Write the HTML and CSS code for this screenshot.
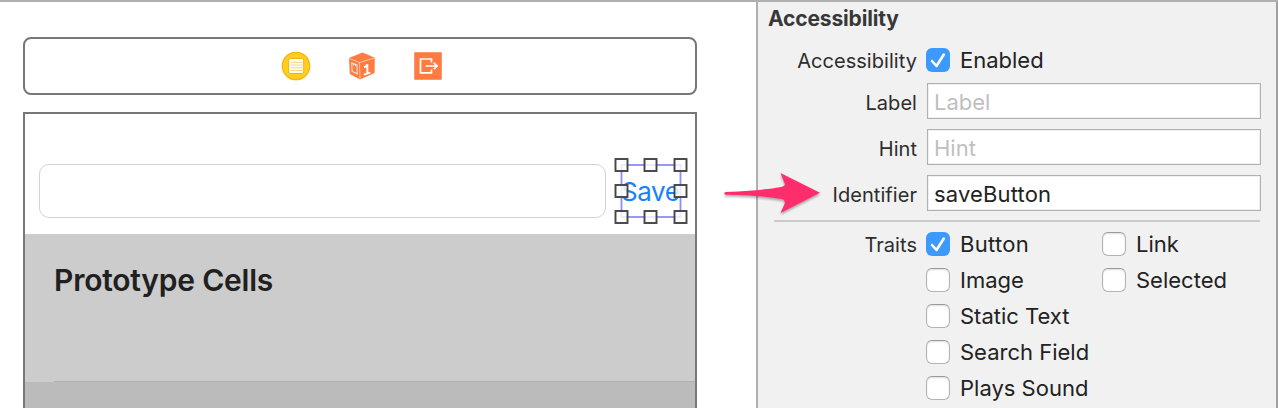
FILE: index.html
```html
<!DOCTYPE html>
<html lang="en">
<head>
<meta charset="utf-8">
<title>Accessibility inspector</title>
<link rel="stylesheet" href="styles.css">
</head>
<body>
<div class="window">
  <main class="canvas">
    <div class="dock">
      <svg class="icon" viewBox="0 0 30 30">
        <circle cx="15" cy="15" r="13.7" fill="#ffce1c" stroke="#f6b41b" stroke-width="1.3"/>
        <rect x="7.7" y="7.5" width="15" height="15" rx="1.5" fill="#fffdf4" stroke="#eeb21c"/>
        <path d="M10 11.3h12.500M10 14.100h12.500M10 16.800h12.500M10 19.500h12.500" stroke="#f5d27c" stroke-width="1"/>
      </svg>
      <svg class="icon" viewBox="0 0 30 30">
        <path d="M15.500 1.500 27.800 6.700 27.600 22 13 28.500 2.800 23 2 7Z" fill="#ff7b40"/>
        <path d="M2.300 7.500 12.500 11.500 27.500 7M12.500 11.500 13 28" fill="none" stroke="#ffc7ae" stroke-width="1"/>
        <path d="M4.700 12 10 14 10.300 22.800 5.200 20.500ZM6.500 12.500V14.500M8.500 13.300V15.300" fill="none" stroke="#ffe2d5" stroke-width="1.100"/>
        <path d="M17 16.300Q19.700 15.600 20.300 13.300V22.500M17 23.600 23.300 21.600" fill="none" stroke="#fff" stroke-width="2"/>
      </svg>
      <svg class="icon" viewBox="0 0 30 30">
        <rect x="1.700" y="1.700" width="26.600" height="26.600" fill="#ff7b40" stroke="#f66f35" stroke-width=".6"/>
        <path d="M18.500 11.500V8H7.500V21.800H18.500V18.500" fill="none" stroke="#fff" stroke-width="1.700"/>
        <path d="M12.500 15H23.500M20.800 11.800 24.200 15 20.800 18.200" fill="none" stroke="#fff" stroke-width="1.700"/>
      </svg>
    </div>
    <div class="device">
      <div class="cell">
        <div class="textfield"></div>
        <div class="selected">
          <span class="save">Save</span>
          <svg class="handles" viewBox="0 0 74 68">
            <rect x="7.500" y="8" width="59" height="52" fill="none" stroke="#8c8cff" stroke-width="1.800"/>
            <g fill="#fff" fill-opacity=".82" stroke="#444" stroke-width="1.900">
              <rect x="1.500" y="2" width="12" height="12"/><rect x="30.500" y="2" width="12" height="12"/><rect x="60.500" y="2" width="12" height="12"/>
              <rect x="1.500" y="28" width="12" height="12"/><rect x="60.500" y="28" width="12" height="12"/>
              <rect x="1.500" y="54" width="12" height="12"/><rect x="30.500" y="54" width="12" height="12"/><rect x="60.500" y="54" width="12" height="12"/>
            </g>
          </svg>
        </div>
      </div>
      <div class="prototype">Prototype Cells</div>
      <div class="table-end"></div>
    </div>
  </main>
  <aside class="inspector">
    <h1 class="title">Accessibility</h1>
    <div class="row row-enabled">
      <span class="name">Accessibility</span>
      <span class="check on"><svg viewBox="0 0 24 24"><path d="M6 13 10.500 18 17.800 6.500"/></svg></span>
      <span class="option">Enabled</span>
    </div>
    <div class="fields">
      <div class="row"><span class="name">Label</span><span class="input hint">Label</span></div>
      <div class="row"><span class="name">Hint</span><span class="input hint">Hint</span></div>
      <div class="row"><span class="name">Identifier</span><span class="input value">saveButton</span></div>
    </div>
    <div class="divider"></div>
    <div class="traits">
      <span class="name">Traits</span><span class="check on"><svg viewBox="0 0 24 24"><path d="M6 13 10.500 18 17.800 6.500"/></svg></span><span class="option button-option">Button</span><span class="check"></span><span class="option">Link</span>
      <span></span><span class="check"></span><span class="option">Image</span><span class="check"></span><span class="option">Selected</span>
      <span></span><span class="check"></span><span class="option wide">Static Text</span>
      <span></span><span class="check"></span><span class="option wide">Search Field</span>
      <span></span><span class="check"></span><span class="option wide">Plays Sound</span>
    </div>
  </aside>
  <svg class="arrow" viewBox="0 0 104 50">
    <path d="M5.500 22Q43 20.500 61 17Q66 16 64.500 13L60.500 3 100 22.700 60.500 43 64.500 34Q66 29.500 61 29Q43 25.500 5.500 24.700Q3 23.300 5.500 22Z" fill="#ff2d6b"/>
  </svg>
</div>
</body>
</html>
```
FILE: styles.css
```css
* { box-sizing: border-box; }
body {
  margin: 0;
  font-family: Inter, "Liberation Sans", sans-serif;
  color: #222;
}
.window {
  position: relative;
  display: flex;
  width: 1278px;
  height: 408px;
  overflow: hidden;
  border-top: 2px solid #b0b0b0;
  background: #fff;
}
.canvas {
  width: 756px;
  padding: 35px 59px 0 23px;
}
.dock {
  display: flex;
  align-items: center;
  justify-content: center;
  gap: 36px;
  height: 58px;
  padding: 0 0 1px 4px;
  border: 2px solid #777;
  border-radius: 8px;
}
.icon { width: 30px; height: 30px; }
.device {
  height: 310px;
  margin-top: 17px;
  border: 2px solid #777;
}
.cell {
  display: flex;
  gap: 15px;
  height: 120px;
  padding: 50px 0 0 14px;
}
.textfield {
  width: 567px;
  height: 54px;
  border: 1px solid #d3d3d3;
  border-radius: 10px;
}
.selected {
  position: relative;
  display: flex;
  align-items: center;
  width: 60px;
  height: 54px;
}
.save {
  padding-top: 1px;
  font-size: 26px;
  letter-spacing: -.4px;
  color: #1782fb;
}
.handles {
  position: absolute;
  left: -7px;
  top: -7px;
  width: 74px;
  height: 68px;
}
.prototype {
  height: 148px;
  padding: 29px 0 0 29px;
  font-size: 30px;
  line-height: 34px;
  font-weight: 600;
  letter-spacing: -.22px;
  color: #202020;
  background: linear-gradient(#b0b0b0, #b0b0b0) 29px 147px / 100% 1px no-repeat #ccc;
}
.table-end { height: 40px; background: #bbb; }
.inspector {
  width: 522px;
  border-left: 2px solid #b0b0b0;
  border-right: 2px solid #a0a0a0;
  background: #f1f1f1;
}
.title {
  height: 34px;
  margin: 0;
  padding-left: 10px;
  font-size: 21px;
  line-height: 34px;
  font-weight: 700;
  letter-spacing: -.15px;
  color: #383838;
}
.row { display: flex; align-items: center; height: 36px; }
.row-enabled { height: 48px; }
.name {
  flex: none;
  width: 159px;
  padding-top: 2px;
  font-size: 20px;
  letter-spacing: .05px;
  text-align: right;
  color: #2d2d2d;
}
.fields .name { padding-top: 4px; }
.check {
  flex: none;
  width: 24px;
  height: 24px;
  border: 1px solid #b3b3b3;
  border-top-color: #999;
  border-radius: 6px;
  background: #fff;
  box-shadow: inset 0 1px 2px #ddd;
}
.row .check { margin-left: 9px; }
.check.on { border: 0; background: #3c99fd; box-shadow: none; }
.check svg { display: block; }
.check path { fill: none; stroke: #fff; stroke-width: 2.6; stroke-linecap: round; stroke-linejoin: round; }
.option { padding-left: 10px; font-size: 22px; white-space: nowrap; }
.button-option { letter-spacing: .3px; }
.fields { display: grid; gap: 10px; margin-top: -1px; }
.input {
  width: 334px;
  height: 36px;
  margin-left: 10px;
  padding: 2px 0 0 6px;
  border: 1px solid #b0b0b0;
  box-shadow: inset 0 0 0 1px #f0f0f0;
  background: #fff;
  font-size: 22px;
  line-height: 33px;
}
.hint { color: #bfbfbf; }
.value { letter-spacing: .15px; }
.divider { height: 2px; margin: 9px 16px 0; background: #cbcbcb; }
.traits {
  display: grid;
  grid-template-columns: 168px 24px 152px 24px 1fr;
  grid-auto-rows: 36px;
  align-items: center;
  margin-top: 4px;
}
.wide { grid-column: span 3; }
.arrow {
  position: absolute;
  left: 720px;
  top: 168px;
  width: 104px;
  height: 50px;
  filter: drop-shadow(0 2px 1px rgba(0, 0, 0, .3));
}
```
